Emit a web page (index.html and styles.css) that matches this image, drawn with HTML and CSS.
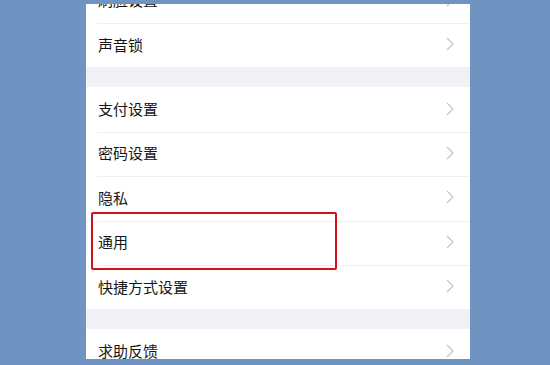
FILE: index.html
```html
<!DOCTYPE html>
<html lang="zh">
<head>
<meta charset="utf-8">
<link rel="stylesheet" href="styles.css">
</head>
<body>
<div class="panel">
  <div class="scroller">
    <div class="group">
      <div class="row"><span class="label">刷脸设置</span><svg class="chev" viewBox="0 0 8 14"><path d="M1 1l6 6-6 6"/></svg></div>
      <div class="row"><span class="label">声音锁</span><svg class="chev" viewBox="0 0 8 14"><path d="M1 1l6 6-6 6"/></svg></div>
    </div>
    <div class="gap"></div>
    <div class="group">
      <div class="row"><span class="label">支付设置</span><svg class="chev" viewBox="0 0 8 14"><path d="M1 1l6 6-6 6"/></svg></div>
      <div class="row"><span class="label">密码设置</span><svg class="chev" viewBox="0 0 8 14"><path d="M1 1l6 6-6 6"/></svg></div>
      <div class="row"><span class="label">隐私</span><svg class="chev" viewBox="0 0 8 14"><path d="M1 1l6 6-6 6"/></svg></div>
      <div class="row"><span class="label">通用</span><svg class="chev" viewBox="0 0 8 14"><path d="M1 1l6 6-6 6"/></svg></div>
      <div class="row"><span class="label">快捷方式设置</span><svg class="chev" viewBox="0 0 8 14"><path d="M1 1l6 6-6 6"/></svg></div>
    </div>
    <div class="gap"></div>
    <div class="group">
      <div class="row"><span class="label">求助反馈</span><svg class="chev" viewBox="0 0 8 14"><path d="M1 1l6 6-6 6"/></svg></div>
    </div>
  </div>
  <div class="highlight"></div>
</div>
</body>
</html>
```
FILE: styles.css
```css
html, body {
  margin: 0;
  padding: 0;
}
body {
  width: 550px;
  height: 365px;
  background: #7094c1;
  overflow: hidden;
  font-family: "Noto Sans CJK SC", "Noto Sans", sans-serif;
}
.panel {
  position: relative;
  margin: 4px 0 0 86px;
  width: 384px;
  height: 355px;
  background: #ffffff;
  overflow: hidden;
}
.scroller {
  margin-top: -25.4px;
}
.group {
  background: #ffffff;
}
.row {
  position: relative;
  height: 44.4px;
  display: flex;
  align-items: center;
  justify-content: space-between;
  padding: 0 16px 2px 12px;
  box-sizing: border-box;
}
.row + .row::before {
  content: "";
  position: absolute;
  left: 11px;
  right: 0;
  top: 0;
  height: 1px;
  background: #efefef;
}
.label {
  font-size: 15px;
  color: #161616;
  line-height: 1;
}
.chev {
  width: 8px;
  height: 14px;
  fill: none;
  stroke: #c4c4c8;
  stroke-width: 1.2;
}
.gap {
  height: 20px;
  background: #f2f2f6;
}
.highlight {
  position: absolute;
  left: 5px;
  top: 208px;
  width: 246px;
  height: 58px;
  border: 2px solid #d0121b;
  border-radius: 2px;
  box-sizing: border-box;
}
```
